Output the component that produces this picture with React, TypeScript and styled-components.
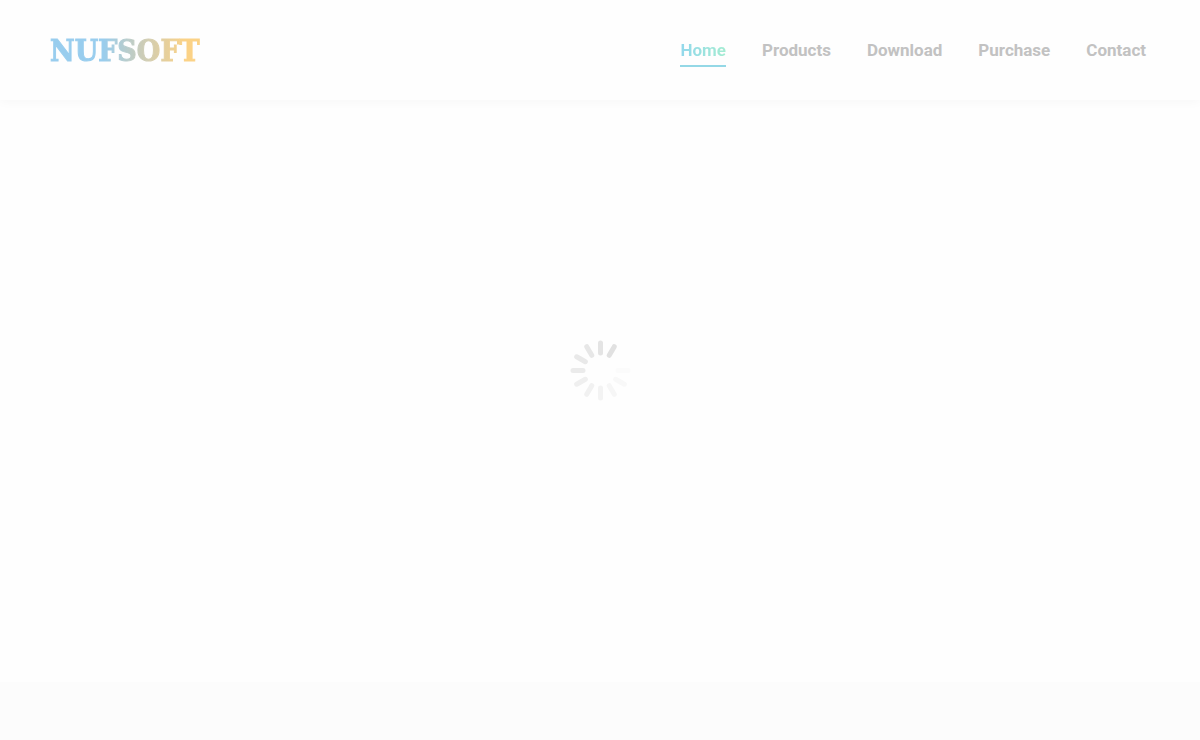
import React from "react";
import styled, { createGlobalStyle } from "styled-components";

const GlobalStyle = createGlobalStyle`
  * { box-sizing: border-box; }
  body {
    margin: 0;
    background: #fefefe;
    font-family: Roboto, "Liberation Sans", sans-serif;
  }
`;

const Page = styled.div`
  display: flex;
  flex-direction: column;
  min-height: 100vh;
`;

const Header = styled.header`
  display: flex;
  align-items: center;
  justify-content: space-between;
  height: 100px;
  padding: 2px 54px 0 50px;
  background: #fefefe;
  box-shadow: 0 2px 10px rgba(0, 0, 0, 0.03);
`;

const Logo = styled.a`
  font-family: "Roboto Slab", "DejaVu Serif Condensed", "DejaVu Serif", serif;
  font-size: 30px;
  font-weight: 700;
  line-height: 40px;
  text-decoration: none;
  color: transparent;
  -webkit-text-stroke: 1px transparent;
  background: linear-gradient(90deg, #98cdee 0%, #98cdee 35%, #c9ccba 60%, #fbd286 90%);
  background-clip: text;
  -webkit-background-clip: text;
`;

const Nav = styled.nav`
  display: flex;
  gap: 36px;
`;

const NavLabel = styled.span<{ $active?: boolean }>`
  display: block;
  color: ${(p) => (p.$active ? "transparent" : "#c2c2c2")};
  background: ${(p) => (p.$active ? "linear-gradient(90deg, #92d8ec, #a4ecd2)" : "none")};
  background-clip: text;
  -webkit-background-clip: text;
`;

const NavLink = styled.a<{ $active?: boolean }>`
  font-size: 17px;
  font-weight: 700;
  line-height: 30px;
  text-decoration: none;
  border-bottom: 2px solid ${(p) => (p.$active ? "#94d8e6" : "transparent")};
`;

const Main = styled.main`
  display: flex;
  flex: 1;
`;

const Footer = styled.footer`
  height: 58px;
  background: #fcfcfc;
`;

const Loader = styled.div`
  position: fixed;
  inset: 0;
  display: flex;
  align-items: center;
  justify-content: center;
  pointer-events: none;
`;

const links = ["Home", "Products", "Download", "Purchase", "Contact"];

const spokes = [
  { angle: 0, color: "#e4e4e4" },
  { angle: 30, color: "#e1e1e1" },
  { angle: 90, color: "#fbfbfb" },
  { angle: 120, color: "#f8f8f8" },
  { angle: 150, color: "#f6f6f6" },
  { angle: 180, color: "#f3f3f3" },
  { angle: 210, color: "#f1f1f1" },
  { angle: 240, color: "#efefef" },
  { angle: 270, color: "#ebebeb" },
  { angle: 300, color: "#e9e9e9" },
  { angle: 330, color: "#e7e7e7" },
];

export default function App() {
  return (
    <Page>
      <GlobalStyle />
      <Header>
        <Logo href="#">NUFSOFT</Logo>
        <Nav>
          {links.map((label, i) => (
            <NavLink key={label} href="#" $active={i === 0}>
              <NavLabel $active={i === 0}>{label}</NavLabel>
            </NavLink>
          ))}
        </Nav>
      </Header>
      <Main />
      <Footer />
      <Loader role="status" aria-label="Loading">
        <svg width="64" height="64" viewBox="0 0 64 64" aria-hidden="true">
          {spokes.map((s) => (
            <rect
              key={s.angle}
              x="30"
              y="2.5"
              width="5"
              height="15"
              rx="2.5"
              fill={s.color}
              transform={`rotate(${s.angle} 32.5 32.5)`}
            />
          ))}
        </svg>
      </Loader>
    </Page>
  );
}
